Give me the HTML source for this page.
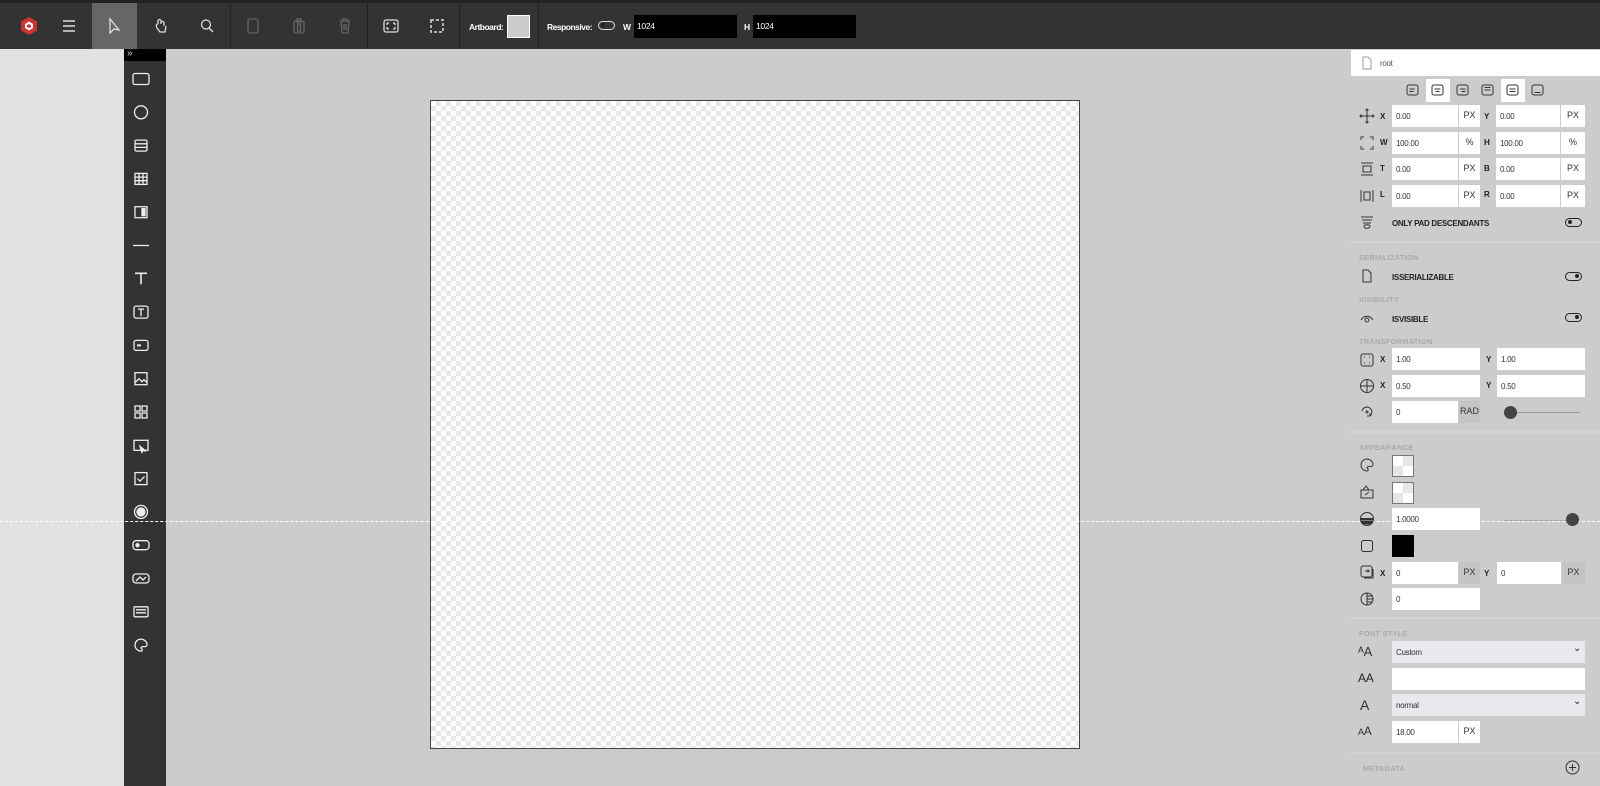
<!DOCTYPE html>
<html><head><meta charset="utf-8"><style>
*{box-sizing:border-box;margin:0;padding:0}
body{width:1600px;height:786px;overflow:hidden;background:#ccc;font-family:"Liberation Sans",sans-serif;position:relative}
.a{position:absolute}
#top{left:0;top:0;width:1600px;height:49px;background:#333;border-top:3px solid #222}
.sep{position:absolute;top:0;width:1px;height:46px;background:#222}
.ic{position:absolute;top:14px;width:20px;height:20px}
.lbl{font-size:8.5px;font-weight:bold;color:#fff;position:absolute;top:19px;letter-spacing:-0.5px}
.blk{position:absolute;top:12px;height:23px;background:#000;color:#fff;font-size:8.5px;padding:6px 3px;letter-spacing:-0.3px}
#left{left:0;top:49px;width:124px;height:737px;background:#e1e1e1}
#tb{left:124px;top:49px;width:42px;height:737px;background:#333}
.r{position:absolute;font-size:8px;color:#222;letter-spacing:-0.3px}
.in{position:absolute;height:22px;background:#fff;font-size:8px;color:#333;padding:7px 4px;letter-spacing:-0.3px}
.u{position:absolute;height:22px;width:21px;background:#fff;font-size:9px;color:#333;text-align:center;padding-top:5px}
.u.g{background:#c4c4c4 !important}
.k{position:absolute;font-size:8px;font-weight:bold;color:#222;left:1380px}
.sec{position:absolute;left:1359px;font-size:7.5px;color:#aaa;font-weight:bold;letter-spacing:.2px}
.div{position:absolute;left:1351px;width:249px;height:2px;background:#d3d3d3}
.pi{position:absolute;left:1359px;width:16px;height:16px}
.tg{position:absolute;width:17px;height:9px;border:1.5px solid #222;border-radius:5px}
.tg::after{content:"";position:absolute;top:1px;width:4px;height:4px;border-radius:50%;background:#222}
.tg.on::after{right:2px}.tg.off::after{left:2px}
.sw{position:absolute;left:1392px;width:22px;height:22px;border:1px solid #777;background:conic-gradient(#e6e6e6 25%,#fff 0 50%,#e6e6e6 0 75%,#fff 0);background-size:20px 20px}
.sel{position:absolute;left:1392px;width:193px;height:22px;background:#e9e9ed;font-size:8px;color:#333;padding:7px 4px;letter-spacing:-0.3px}
</style></head><body>
<div id="top" class="a">
 <svg class="ic" style="left:19px;top:13px" viewBox="0 0 20 20"><polygon points="10,1 18,5.5 18,14.5 10,19 2,14.5 2,5.5" fill="#c33"/><polygon points="10,5.5 14,8 14,12 10,14.5 6,12 6,8" fill="#fff"/><polygon points="10,8 12,9.2 12,11 10,12 8,11 8,9.2" fill="#c33"/></svg>
 <svg class="ic" style="left:59px;top:13px" viewBox="0 0 20 20" stroke="#ddd" stroke-width="1.5"><path d="M4 5h12M4 10h12M4 15h12"/></svg>
 <div class="a" style="left:92px;top:0;width:45px;height:46px;background:#666"></div>
 <svg class="ic" style="left:105px;top:13px" viewBox="0 0 20 20" fill="none" stroke="#ddd" stroke-width="1.3"><path d="M5 3v14l4-4 5 1z"/></svg>
 <svg class="ic" style="left:151px;top:13px" viewBox="0 0 20 20" fill="none" stroke="#ddd" stroke-width="1.3"><path d="M7 8V5a1.5 1.5 0 013 0v3m0-1a1.5 1.5 0 013 0v3M7 8c-2 0-2 2-1 4l3 4h5l1-6"/></svg>
 <svg class="ic" style="left:197px;top:13px" viewBox="0 0 20 20" fill="none" stroke="#ddd" stroke-width="1.3"><circle cx="9" cy="8.5" r="4.5"/><path d="M12 12l4 4"/></svg>
 <div class="sep" style="left:230px"></div>
 <svg class="ic" style="left:243px;top:13px" viewBox="0 0 20 20" fill="none" stroke="#666" stroke-width="1.3"><rect x="5" y="3" width="10" height="14" rx="2"/></svg>
 <svg class="ic" style="left:289px;top:13px" viewBox="0 0 20 20" fill="none" stroke="#666" stroke-width="1.3"><rect x="5" y="5" width="10" height="12" rx="2"/><rect x="8" y="3" width="4" height="3"/><rect x="8.5" y="8" width="3" height="7"/></svg>
 <svg class="ic" style="left:335px;top:13px" viewBox="0 0 20 20" fill="none" stroke="#666" stroke-width="1.3"><path d="M5 5h10M8 5V3h4v2M6 5l1 12h6l1-12M9 8v6M11 8v6"/></svg>
 <div class="sep" style="left:367px"></div>
 <svg class="ic" style="left:381px;top:13px" viewBox="0 0 20 20" fill="none" stroke="#ddd" stroke-width="1.3"><rect x="3" y="4" width="14" height="12" rx="2"/><path d="M6 7h2M6 7v2M14 13h-2M14 13v-2M14 7h-2M14 7v2M6 13h2M6 13v-2"/></svg>
 <svg class="ic" style="left:427px;top:13px" viewBox="0 0 20 20" fill="none" stroke="#ddd" stroke-width="1.5" stroke-dasharray="3 2"><rect x="4" y="4" width="12" height="12"/></svg>
 <div class="sep" style="left:459px"></div>
 <div class="lbl" style="left:469px">Artboard:</div>
 <div class="a" style="left:507px;top:12px;width:23px;height:23px;background:#ccc;border:1px solid #fff"></div>
 <div class="sep" style="left:538px"></div>
 <div class="lbl" style="left:547px">Responsive:</div>
 <div class="tg off" style="left:598px;top:18px;border-color:#ddd"></div>
 <div class="lbl" style="left:623px">W</div>
 <div class="blk" style="left:634px;width:103px">1024</div>
 <div class="lbl" style="left:744px">H</div>
 <div class="blk" style="left:753px;width:103px">1024</div>
</div>
<div id="left" class="a"></div>
<div id="tb" class="a"></div>
<div class="a" style="left:124px;top:49px;width:42px;height:12px;background:#000;color:#ccc;font-size:10px;line-height:10px;padding-left:3px">»</div>
<svg class="a" style="left:124px;top:70px" width="42" height="600" viewBox="0 0 42 600" fill="none" stroke="#eee" stroke-width="1.3">
 <g transform="translate(17,9)"><rect x="-8" y="-5.5" width="16" height="11" rx="2"/></g>
 <g transform="translate(17,42.3)"><circle r="6.5"/></g>
 <g transform="translate(17,75.6)"><rect x="-6" y="-5.5" width="12" height="11" rx="1.5"/><path d="M-6 -1.8h12M-6 1.8h12"/></g>
 <g transform="translate(17,108.9)"><rect x="-6" y="-5.5" width="12" height="11"/><path d="M-6 -1.8h12M-6 1.8h12M-2 -5.5v11M2 -5.5v11"/></g>
 <g transform="translate(17,142.2)"><rect x="-6" y="-5.5" width="12" height="11"/><rect x="1" y="-3.5" width="3" height="7" fill="#eee"/></g>
 <g transform="translate(17,175.5)"><path d="M-8 0h16"/></g>
 <g transform="translate(17,208.8)"><path d="M-6 -5.5h12M0 -5.5v11" stroke-width="1.6"/></g>
 <g transform="translate(17,242.1)"><rect x="-7" y="-6" width="14" height="12" rx="2"/><path d="M-3 -3h6M0 -3v7"/></g>
 <g transform="translate(17,275.4)"><rect x="-7" y="-5" width="14" height="10" rx="2"/><path d="M-4 0h4" stroke-width="2"/></g>
 <g transform="translate(17,308.7)"><rect x="-6" y="-6" width="12" height="12"/><path d="M-6 4l4-4 3 3 2-2 3 3"/></g>
 <g transform="translate(17,342)"><rect x="-6" y="-6" width="5" height="5"/><rect x="1" y="-6" width="5" height="5"/><rect x="-6" y="1" width="5" height="5"/><rect x="1" y="1" width="5" height="5"/></g>
 <g transform="translate(17,375.3)"><rect x="-7" y="-5" width="14" height="10"/><path d="M-1 1l2 6 1-2 3 1z" fill="#eee"/></g>
 <g transform="translate(17,408.6)"><rect x="-6" y="-6" width="12" height="12"/><path d="M-3.5 0l2.5 2.5 4.5-4.5"/></g>
 <g transform="translate(17,441.9)"><circle r="6.5"/><circle r="4" fill="#eee"/></g>
 <g transform="translate(17,475.2)"><rect x="-8" y="-4.5" width="16" height="9" rx="3"/><circle cx="-3.5" r="1.5" fill="#eee"/></g>
 <g transform="translate(17,508.5)"><rect x="-8" y="-4.5" width="16" height="9" rx="3"/><path d="M-5 2.5l4-4 3 3 3-3"/></g>
 <g transform="translate(17,541.8)"><rect x="-7" y="-5" width="14" height="10" rx="1"/><path d="M-5 -2h10M-5 1h10"/></g>
 <g transform="translate(17,575.1)"><path d="M0 -6a6 6 0 100 12c1.5 0 1.5-2 .5-2.5-1-1 0-2 1.5-2h2a2 2 0 002-2c0-3-3-5.5-6-5.5z"/></g>
</svg>
<div class="a" style="left:430px;top:100px;width:650px;height:649px;border:1px solid #444;background:conic-gradient(#e8e8e8 25%,#fff 0 50%,#e8e8e8 0 75%,#fff 0);background-size:10px 10px"></div>
<div class="a" style="left:0;top:521px;width:1600px;border-top:1px dashed #fff"></div>

<div id="rp" class="a"></div>
<div class="a" style="left:1351px;top:50px;width:249px;height:26px;background:#fff"></div>
<svg class="pi" style="top:55px" viewBox="0 0 16 16" fill="none" stroke="#999"><path d="M4 2h5l3 3v9H4z"/></svg>
<div class="r" style="left:1380px;top:59px;color:#555">root</div>
<div class="a" style="left:1426px;top:79px;width:24px;height:23px;background:#fff"></div>
<div class="a" style="left:1501px;top:79px;width:24px;height:23px;background:#fff"></div>
<svg class="a" style="left:1400px;top:82px" width="160" height="16" viewBox="0 0 160 16" fill="none" stroke="#333" stroke-width="1">
 <rect x="7" y="3" width="11" height="10" rx="2"/><path d="M9.5 7h5M9.5 9.5h4"/>
 <rect x="32" y="3" width="11" height="10" rx="2"/><path d="M34.5 7h6M35.5 9.5h4"/>
 <rect x="57" y="3" width="11" height="10" rx="2"/><path d="M60 7h5.5M61.5 9.5h4"/>
 <rect x="82" y="3" width="11" height="10" rx="2"/><path d="M84.5 5.5h6M84.5 8h6"/>
 <rect x="107" y="3" width="11" height="10" rx="2"/><path d="M109.5 7h6M109.5 9.5h6"/>
 <rect x="132" y="3" width="11" height="10" rx="2"/><path d="M134.5 10.5h6"/>
</svg>
<svg class="pi" style="top:108px" viewBox="0 0 16 16" fill="none" stroke="#333"><path d="M8 1v14M1 8h14M6.5 2.5L8 1l1.5 1.5M6.5 13.5L8 15l1.5-1.5M2.5 6.5L1 8l1.5 1.5M13.5 6.5L15 8l-1.5 1.5"/></svg>
<svg class="pi" style="top:135px" viewBox="0 0 16 16" fill="none" stroke="#333"><path d="M2 5V2h3M11 2h3v3M14 11v3h-3M5 14H2v-3"/></svg>
<svg class="pi" style="top:161px" viewBox="0 0 16 16" fill="none" stroke="#333"><path d="M2 2h12M2 14h12"/><rect x="4" y="5" width="8" height="6"/></svg>
<svg class="pi" style="top:188px" viewBox="0 0 16 16" fill="none" stroke="#333"><path d="M2 2v12M14 2v12"/><rect x="5" y="4" width="6" height="8"/></svg>
<svg class="pi" style="top:214px" viewBox="0 0 16 16" fill="none" stroke="#333"><path d="M2 3h12M3 6h10M4 9h8"/><ellipse cx="8" cy="12.5" rx="3" ry="1.8"/></svg>
<div class="k" style="top:112px">X</div><div class="k" style="top:138px">W</div><div class="k" style="top:164px">T</div><div class="k" style="top:190px">L</div>
<div class="k" style="top:112px;left:1484px">Y</div><div class="k" style="top:138px;left:1484px">H</div><div class="k" style="top:164px;left:1484px">B</div><div class="k" style="top:190px;left:1484px">R</div>
<div class="in" style="left:1392px;top:105px;width:66px">0.00</div><div class="u" style="left:1459px;top:105px">PX</div>
<div class="in" style="left:1496px;top:105px;width:64px">0.00</div><div class="u" style="left:1561px;top:105px;width:24px">PX</div>
<div class="in" style="left:1392px;top:132px;width:66px">100.00</div><div class="u" style="left:1459px;top:132px">%</div>
<div class="in" style="left:1496px;top:132px;width:64px">100.00</div><div class="u" style="left:1561px;top:132px;width:24px">%</div>
<div class="in" style="left:1392px;top:158px;width:66px">0.00</div><div class="u" style="left:1459px;top:158px">PX</div>
<div class="in" style="left:1496px;top:158px;width:64px">0.00</div><div class="u" style="left:1561px;top:158px;width:24px">PX</div>
<div class="in" style="left:1392px;top:185px;width:66px">0.00</div><div class="u" style="left:1459px;top:185px">PX</div>
<div class="in" style="left:1496px;top:185px;width:64px">0.00</div><div class="u" style="left:1561px;top:185px;width:24px">PX</div>
<div class="r" style="left:1392px;top:219px;font-weight:bold">ONLY PAD DESCENDANTS</div>
<div class="tg off" style="left:1565px;top:218px"></div>
<div class="div" style="top:241px"></div>
<div class="sec" style="top:253px">SERIALIZATION</div>
<svg class="pi" style="top:268px" viewBox="0 0 16 16" fill="none" stroke="#333"><path d="M4 2h5l3 3v9H4z"/></svg>
<div class="r" style="left:1392px;top:273px;font-weight:bold">ISSERIALIZABLE</div>
<div class="tg on" style="left:1565px;top:272px"></div>
<div class="sec" style="top:295px">VISIBILITY</div>
<svg class="pi" style="top:310px" viewBox="0 0 16 16" fill="none" stroke="#333"><path d="M2 10c3-5 9-5 12 0"/><circle cx="8" cy="10" r="2"/></svg>
<div class="r" style="left:1392px;top:315px;font-weight:bold">ISVISIBLE</div>
<div class="tg on" style="left:1565px;top:313px"></div>
<div class="sec" style="top:337px">TRANSFORMATION</div>
<svg class="pi" style="top:352px" viewBox="0 0 16 16" fill="none" stroke="#333"><rect x="2" y="2" width="12" height="12" rx="2"/><path d="M5 5h1M10 5h1M5 11h1M10 11h1"/></svg>
<svg class="pi" style="top:378px" viewBox="0 0 16 16" fill="none" stroke="#333"><circle cx="8" cy="8" r="6.5"/><path d="M8 1.5v13M1.5 8h13"/></svg>
<svg class="pi" style="top:404px" viewBox="0 0 16 16" fill="none" stroke="#333"><path d="M3 7a5 5 0 118 5M11 12l0-3M11 12l-3 0"/><circle cx="8" cy="8" r="1"/></svg>
<div class="k" style="top:355px">X</div><div class="k" style="top:381px">X</div>
<div class="k" style="top:355px;left:1486px">Y</div><div class="k" style="top:381px;left:1486px">Y</div>
<div class="in" style="left:1392px;top:348px;width:88px">1.00</div><div class="in" style="left:1497px;top:348px;width:88px">1.00</div>
<div class="in" style="left:1392px;top:375px;width:88px">0.50</div><div class="in" style="left:1497px;top:375px;width:88px">0.50</div>
<div class="in" style="left:1392px;top:401px;width:66px">0</div><div class="u g" style="left:1459px;top:401px">RAD</div>
<div class="a" style="left:1506px;top:412px;width:74px;height:1px;background:#999"></div>
<div class="a" style="left:1504px;top:406px;width:13px;height:13px;border-radius:50%;background:#444"></div>
<div class="div" style="top:431px"></div>
<div class="sec" style="top:443px">APPEARANCE</div>
<svg class="pi" style="top:457px" viewBox="0 0 16 16" fill="none" stroke="#333"><path d="M8 2a6 6 0 100 12c1.5 0 1.5-2 .5-2.5-1-1 0-2 1.5-2h2a2 2 0 002-2c0-3-3-5.5-6-5.5z"/></svg>
<svg class="pi" style="top:484px" viewBox="0 0 16 16" fill="none" stroke="#333"><rect x="2" y="6" width="12" height="8"/><path d="M4 6l3-4 3 4M6 11l4-3"/></svg>
<svg class="pi" style="top:511px" viewBox="0 0 16 16" stroke="#333"><circle cx="8" cy="8" r="6.5" fill="none"/><path d="M2 8h12" stroke-width="2"/><path d="M2.5 10h11L12 13H4z" fill="#333"/></svg>
<svg class="pi" style="top:538px" viewBox="0 0 16 16" fill="none" stroke="#333"><rect x="2.5" y="2.5" width="11" height="11" rx="2"/></svg>
<svg class="pi" style="top:564px" viewBox="0 0 16 16" fill="none" stroke="#333"><rect x="2" y="2" width="11" height="11" rx="2"/><path d="M14 5v9H5M6 7h4l-1.5-1.5M10 7l-1.5 1.5"/></svg>
<svg class="pi" style="top:591px" viewBox="0 0 16 16" fill="none" stroke="#333"><circle cx="8" cy="8" r="6"/><path d="M8 2v12M8 5h5M8 8h6M8 11h5"/></svg>
<div class="sw" style="top:455px"></div>
<div class="sw" style="top:482px"></div>
<div class="in" style="left:1392px;top:508px;width:88px">1.0000</div>
<div class="a" style="left:1504px;top:520px;width:68px;height:1px;background:#aaa"></div>
<div class="a" style="left:1566px;top:513px;width:13px;height:13px;border-radius:50%;background:#444"></div>
<div class="a" style="left:1392px;top:535px;width:22px;height:22px;background:#000"></div>
<div class="k" style="top:569px">X</div><div class="k" style="top:569px;left:1484px">Y</div>
<div class="in" style="left:1392px;top:562px;width:66px">0</div><div class="u g" style="left:1459px;top:562px">PX</div>
<div class="in" style="left:1497px;top:562px;width:64px">0</div><div class="u g" style="left:1562px;top:562px;width:23px">PX</div>
<div class="in" style="left:1392px;top:588px;width:88px">0</div>
<div class="div" style="top:617px"></div>
<div class="sec" style="top:629px">FONT STYLE</div>
<div class="r" style="left:1358px;top:644px;font-size:13px;color:#333">ᴬA</div>
<div class="r" style="left:1358px;top:671px;font-size:12px;color:#222">AA</div>
<div class="r" style="left:1360px;top:697px;font-size:14px;color:#333">A</div>
<div class="r" style="left:1358px;top:724px;font-size:12px;color:#333"><span style="font-size:9px">A</span>A</div>
<div class="sel" style="top:641px">Custom</div><div class="r" style="left:1573px;top:643px;font-size:10px">⌄</div>
<div class="in" style="left:1392px;top:668px;width:193px"></div>
<div class="sel" style="top:694px">normal</div><div class="r" style="left:1573px;top:696px;font-size:10px">⌄</div>
<div class="in" style="left:1392px;top:721px;width:66px">18.00</div><div class="u" style="left:1459px;top:721px">PX</div>
<div class="div" style="top:752px"></div>
<div class="sec" style="top:764px;left:1363px">METADATA</div>
<svg class="a" style="left:1565px;top:760px" width="15" height="15" viewBox="0 0 15 15" fill="none" stroke="#333"><circle cx="7.5" cy="7.5" r="6.5"/><path d="M7.5 4v7M4 7.5h7"/></svg>
</body></html>
